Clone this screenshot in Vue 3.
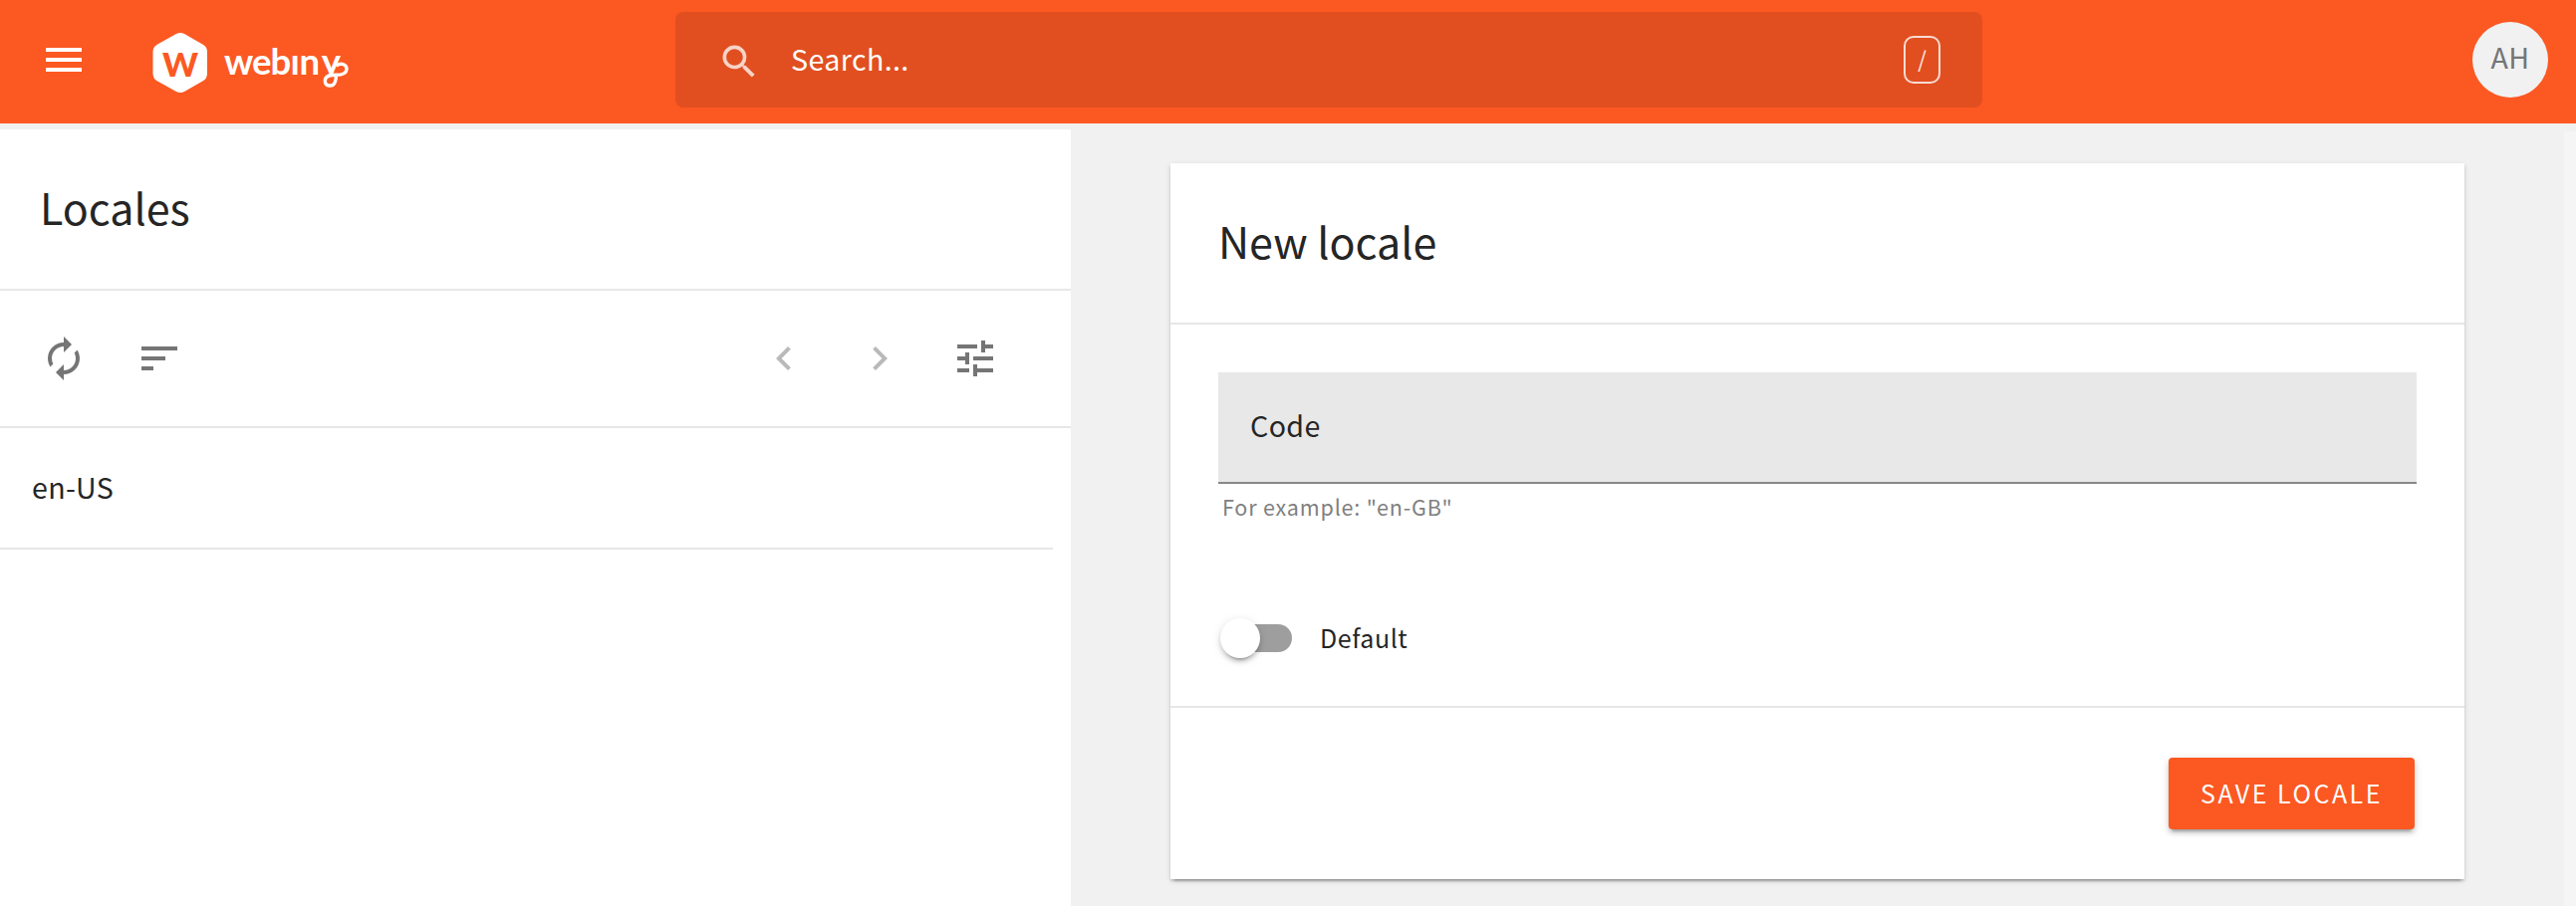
<script setup>
import { ref } from 'vue'

const locales = ref(['en-US'])
const isDefault = ref(false)
const icons = {
  menu: 'M3 18h18v-2H3v2zm0-5h18v-2H3v2zm0-7v2h18V6H3z',
  search: 'M15.5 14h-.79l-.28-.27A6.471 6.471 0 0 0 16 9.5 6.5 6.5 0 1 0 9.5 16c1.61 0 3.09-.59 4.23-1.57l.27.28v.79l5 4.99L20.49 19l-4.99-5zm-6 0C7.01 14 5 11.99 5 9.5S7.01 5 9.5 5 14 7.01 14 9.5 11.99 14 9.5 14z',
  refresh: 'M12 6v3l4-4-4-4v3c-4.42 0-8 3.58-8 8 0 1.57.46 3.03 1.24 4.26L6.7 14.8A5.87 5.87 0 0 1 6 12c0-3.31 2.69-6 6-6zm6.76 1.74L17.3 9.2c.44.84.7 1.79.7 2.8 0 3.31-2.69 6-6 6v-3l-4 4 4 4v-3c4.42 0 8-3.58 8-8 0-1.57-.46-3.03-1.24-4.26z',
  sort: 'M3 18h6v-2H3v2zM3 6v2h18V6H3zm0 7h12v-2H3v2z',
  prev: 'M15.41 7.41L14 6l-6 6 6 6 1.41-1.41L10.83 12z',
  next: 'M10 6L8.59 7.41 13.17 12l-4.58 4.59L10 18l6-6z',
  tune: 'M3 17v2h6v-2H3zM3 5v2h10V5H3zm10 16v-2h8v-2h-8v-2h-2v6h2zM7 9v2H3v2h4v2h2V9H7zm14 4v-2H11v2h10zm-6-4h2V7h4V5h-4V3h-2v6z'
}
</script>

<template>
  <div class="app">
    <header class="topbar">
      <div class="brand">
        <svg class="icon white" viewBox="0 0 24 24"><path :d="icons.menu" /></svg>
        <svg class="logo" viewBox="150 28 204 64">
          <clipPath id="word-clip"><rect x="220" y="30" width="140" height="45.500" /></clipPath>
          <path
            class="hex"
            d="M176.500 34.200Q181 31.800 185.500 34.200L203.800 44.700Q208 47.200 208 52V74Q208 78.800 203.800 81.300L185.500 91.800Q181 94.200 176.500 91.800L157.700 81.300Q153.500 78.800 153.500 74V52Q153.500 47.200 157.700 44.700Z"
          />
          <text class="mark" x="163" y="77" textLength="36" lengthAdjust="spacingAndGlyphs">W</text>
          <text class="word" x="225 253 271.500 291.500 300.500 322.800" y="74.700" clip-path="url(#word-clip)">webıny</text>
          <path
            class="swirl"
            d="M337.500 66C343 62.500 348.200 65 348 69.500C347.800 74 343 75.300 337 75.300C330 75.300 326.300 77 326.300 81C326.300 87.300 334.500 87.800 336.500 82C337 80.500 337.400 78.500 337.500 76"
          />
        </svg>
      </div>
      <div class="search">
        <svg class="search-icon" viewBox="0 0 24 24"><path :d="icons.search" /></svg>
        <span class="placeholder">Search...</span>
        <span class="key">/</span>
      </div>
      <div class="account"><div class="avatar">AH</div></div>
    </header>

    <main class="body">
      <section class="list">
        <h1 class="list-title">Locales</h1>
        <div class="toolbar">
          <svg class="icon" viewBox="0 0 24 24"><path :d="icons.refresh" /></svg>
          <svg class="icon" viewBox="0 0 24 24"><path :d="icons.sort" /></svg>
          <span class="spacer"></span>
          <svg class="icon dim" viewBox="0 0 24 24"><path :d="icons.prev" /></svg>
          <svg class="icon dim" viewBox="0 0 24 24"><path :d="icons.next" /></svg>
          <svg class="icon" viewBox="0 0 24 24"><path :d="icons.tune" /></svg>
        </div>
        <div v-for="code in locales" :key="code" class="row">{{ code }}</div>
      </section>

      <section class="details">
        <div class="card">
          <h2 class="card-title">New locale</h2>
          <div class="form">
            <div class="field">Code</div>
            <div class="hint">For example: "en-GB"</div>
            <div class="switch-row" @click="isDefault = !isDefault">
              <span class="track"><span class="knob" :class="{ on: isDefault }"></span></span>
              <span class="switch-label">Default</span>
            </div>
          </div>
          <div class="actions"><button class="save">SAVE LOCALE</button></div>
        </div>
      </section>
      <div class="gutter"></div>
    </main>
  </div>
</template>

<style>
body { margin: 0; overflow: hidden; background: #f1f1f1; }
</style>

<style scoped>
.app, .app * { box-sizing: border-box; }
.app {
  width: 2586px;
  height: 910px;
  display: flex;
  flex-direction: column;
  overflow: hidden;
  background: #f1f1f1;
  color: #252525;
  font-family: "Noto Sans CJK SC", "Noto Sans", sans-serif;
}
.icon { width: 48px; height: 48px; fill: #757575; display: block; flex: none; }
.icon.white { fill: #fff; }
.icon.dim { fill: #b9b9b9; }

.topbar {
  height: 124px;
  flex: none;
  display: grid;
  grid-template-columns: 678px 1312px 1fr;
  align-items: start;
  background: #fc5822;
}
.brand { display: flex; align-items: center; height: 120px; padding-left: 40px; }
.logo { width: 204px; height: 64px; margin-left: 62px; overflow: visible; }
.hex { fill: #fff; }
.mark { font: 900 33px Lato, sans-serif; fill: #fc5822; }
.word { font: 700 36.500px Lato, sans-serif; fill: #fff; }
.swirl { fill: none; stroke: #fff; stroke-width: 3.400px; }

.search {
  height: 96px;
  margin-top: 12px;
  display: flex;
  align-items: center;
  padding: 0 42px 0 42px;
  border-radius: 8px;
  background: #e14f20;
}
.search-icon { width: 44px; height: 44px; margin-top: 3px; fill: rgba(255, 255, 255, .75); }
.placeholder {
  flex: 1;
  margin-left: 30px;
  padding-bottom: 3px;
  font-size: 28.600px;
  letter-spacing: .4px;
  color: #fff;
}
.key {
  width: 37px;
  height: 48px;
  display: flex;
  justify-content: center;
  align-items: center;
  padding-bottom: 5px;
  border: 2px solid rgba(255, 255, 255, .8);
  border-radius: 10px;
  color: rgba(255, 255, 255, .9);
  font-size: 22px;
  line-height: 1;
  font-weight: 400;
}
.account { display: flex; justify-content: flex-end; padding: 22px 28px 0 0; }
.avatar {
  width: 76px;
  height: 76px;
  display: flex;
  align-items: center;
  justify-content: center;
  padding-bottom: 7px;
  border-radius: 50%;
  background: #f1f1f1;
  color: #757575;
  font-size: 28.600px;
  letter-spacing: .4px;
}

.body { flex: 1; display: flex; min-height: 0; }
.list { width: 1075px; flex: none; margin-top: 6px; background: #fff; }
.list-title, .card-title {
  height: 162px;
  margin: 0;
  padding-bottom: 7px;
  display: flex;
  align-items: center;
  border-bottom: 2px solid #e7e7e7;
  font-size: 43px;
  font-weight: 400;
}
.list-title { padding-left: 40px; }
.toolbar {
  height: 138px;
  display: flex;
  align-items: center;
  gap: 48px;
  padding: 0 72px 0 40px;
  border-bottom: 2px solid #e7e7e7;
}
.spacer { flex: 1; }
.row {
  height: 122px;
  margin-right: 18px;
  padding: 0 0 4px 32px;
  display: flex;
  align-items: center;
  border-bottom: 2px solid #e7e7e7;
  font-size: 28.600px;
  letter-spacing: .3px;
}

.details { flex: 1; padding: 40px 100px 0; }
.card {
  height: 719px;
  display: flex;
  flex-direction: column;
  background: #fff;
  box-shadow: 0 6px 2px -4px rgba(0, 0, 0, .2), 0 2px 2px rgba(0, 0, 0, .14), 0 2px 6px rgba(0, 0, 0, .12);
}
.card-title { padding-left: 48px; }
.form { height: 385px; padding: 48px 48px 0; border-bottom: 2px solid #e7e7e7; }
.field {
  height: 112px;
  display: flex;
  align-items: center;
  padding: 0 32px 5px;
  border-bottom: 2px solid #888;
  background: #e8e8e8;
  font-size: 28.600px;
  letter-spacing: .4px;
}
.hint {
  height: 44px;
  padding-left: 4px;
  line-height: 45px;
  font-size: 21.500px;
  letter-spacing: .82px;
  color: #808080;
}
.switch-row { height: 40px; margin-top: 91px; display: flex; align-items: center; padding-left: 10px; }
.track { width: 64px; height: 28px; display: flex; align-items: center; border-radius: 14px; background: #9e9e9e; }
.knob {
  width: 40px;
  height: 40px;
  margin-left: -8px;
  flex: none;
  border-radius: 50%;
  background: #fff;
  box-shadow: 0 6px 2px -4px rgba(0, 0, 0, .2), 0 4px 4px rgba(0, 0, 0, .14), 0 2px 10px rgba(0, 0, 0, .12);
}
.knob.on { margin-left: 32px; }
.switch-label { margin-left: 28px; padding-bottom: 2px; font-size: 25px; letter-spacing: .55px; }
.actions { flex: 1; display: flex; align-items: flex-start; justify-content: flex-end; padding: 50px 50px 0 0; }
.save {
  width: 247px;
  height: 72px;
  padding: 0 0 3px;
  border: 0;
  border-radius: 4px;
  background: #fc5822;
  box-shadow: 0 6px 2px -4px rgba(0, 0, 0, .2), 0 4px 4px rgba(0, 0, 0, .14), 0 2px 10px rgba(0, 0, 0, .12);
  color: #fff;
  font-family: inherit;
  font-size: 25px;
  letter-spacing: 2.500px;
  white-space: nowrap;
}
.gutter { width: 12px; margin-top: 8px; background: #f5f5f5; }
</style>
